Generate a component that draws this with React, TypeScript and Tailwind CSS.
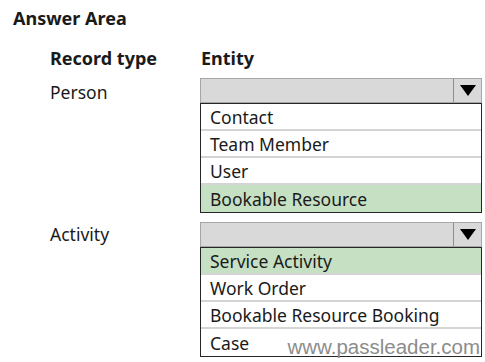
import { Fragment } from 'react';

type Choice = { options: string[]; selected: number };

const rows: { label: string; choice: Choice }[] = [
  {
    label: 'Person',
    choice: { options: ['Contact', 'Team Member', 'User', 'Bookable Resource'], selected: 3 },
  },
  {
    label: 'Activity',
    choice: {
      options: ['Service Activity', 'Work Order', 'Bookable Resource Booking', 'Case'],
      selected: 0,
    },
  },
];

const Dropdown = ({ choice }: { choice: Choice }) => (
  <div className="w-[282px]">
    <div className="flex h-[25px] border border-[#a6a6a6] bg-[#d9d9d9]">
      <div className="flex-1" />
      <div className="flex w-[28px] items-center justify-center border-l border-[#8c8c8c]">
        <svg width="16" height="11" viewBox="0 0 16 11">
          <path d="M0 0 H16 L8 11 Z" fill="#000" />
        </svg>
      </div>
    </div>
    <ul className="border border-[#262626]">
      {choice.options.map((opt, i) => (
        <li
          key={opt}
          className={`flex h-[27px] items-center pl-[9px] pt-[3px] text-[17.5px] leading-none ${
            i === choice.selected ? 'bg-[#c6e0c4]' : 'bg-white'
          } ${i < choice.options.length - 1 ? 'border-b-2 border-[#d4d4d4]' : ''}`}
        >
          {opt}
        </li>
      ))}
    </ul>
  </div>
);

export default function App() {
  return (
    <div className="relative h-[362px] w-[485px] overflow-hidden bg-white font-['Noto_Sans',sans-serif] text-[#1a1a1a]">
      <h1 className="pl-[13px] pt-[6px] text-[18px] font-bold leading-[24px]">Answer Area</h1>
      <div className="grid grid-cols-[150px_1fr] pl-[50px] pt-[16px]">
        <div className="text-[18px] font-bold leading-[24px]">Record type</div>
        <div className="pl-[1px] text-[18px] font-bold leading-[24px]">Entity</div>
        {rows.map((row, idx) => (
          <Fragment key={row.label}>
            <div className={`text-[17.5px] leading-[25px] ${idx === 0 ? 'mt-[8px] pt-[2px]' : 'mt-[9px]'}`}>
              {row.label}
            </div>
            <div className={idx === 0 ? 'mt-[8px]' : 'mt-[9px]'}>
              <Dropdown choice={row.choice} />
            </div>
          </Fragment>
        ))}
      </div>
      <div className="absolute bottom-[5px] right-[5px] font-['Liberation_Sans',sans-serif] text-[20.5px] leading-none text-[#8c8c8c]">
        www.passleader.com
      </div>
    </div>
  );
}
